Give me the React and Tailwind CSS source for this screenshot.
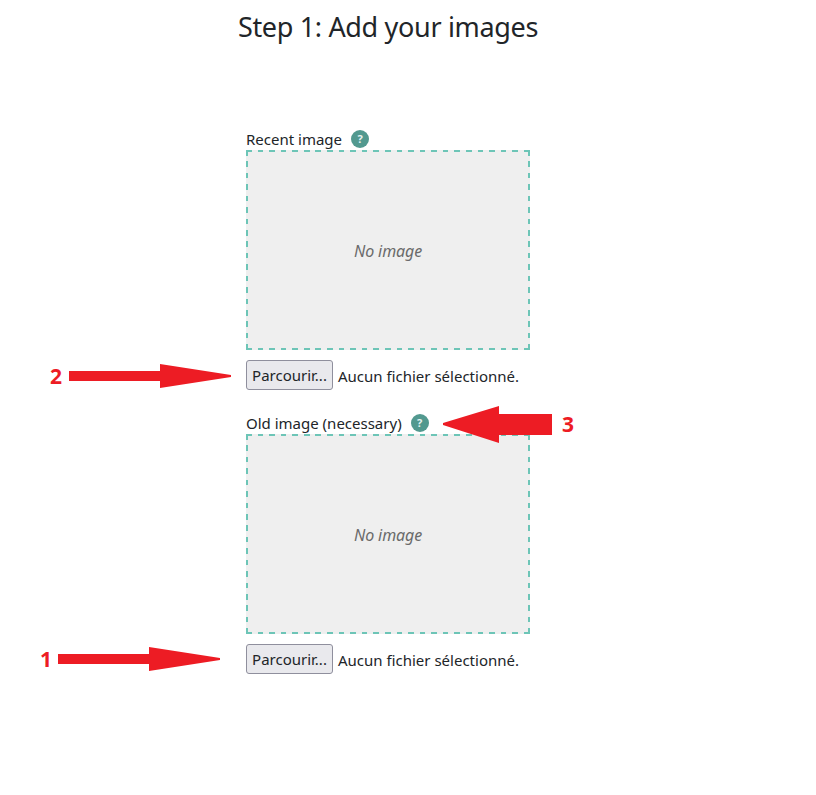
import React from 'react';

const sans = 'font-["Noto_Sans","Open_Sans",sans-serif]';

// Red callout arrow drawn over the page
const Arrow = ({ className, points, width, height }) => (
    <svg className={`absolute ${className}`} width={width} height={height} viewBox={`0 0 ${width} ${height}`}>
        <polygon points={points} fill="#ed1c24" />
    </svg>
);

const Callout = ({ className, children }) => (
    <span className={`absolute font-["Open_Sans",sans-serif] text-[21px] leading-[24px] font-bold text-[#ed1c24] ${className}`}>
        {children}
    </span>
);

const ImageField = ({ label }) => (
    <div className="flex flex-col">
        <div className="flex h-5 items-center pb-0.5 text-[15px] leading-5 text-[#212529]">
            <span>{label}</span>
            <span className="ml-[9px] flex h-[18px] w-[18px] items-center justify-center rounded-full bg-[#52998f] text-[11px] font-bold text-[#e6f2f0]">?</span>
        </div>
        {/* dashes are longer than a css dashed border gives, so they are gradients */}
        <div className="flex h-[200px] w-[284px] items-center justify-center bg-[#efefef] [background-image:repeating-linear-gradient(90deg,#6dc5b7_0_5.6px,transparent_5.6px_11.58px),repeating-linear-gradient(90deg,#6dc5b7_0_5.6px,transparent_5.6px_11.58px),repeating-linear-gradient(180deg,#6dc5b7_0_5.6px,transparent_5.6px_11.43px),repeating-linear-gradient(180deg,#6dc5b7_0_5.6px,transparent_5.6px_11.43px)] [background-position:top,bottom,left,right] [background-size:100%_2px,100%_2px,2px_100%,2px_100%] bg-no-repeat">
            <span className="pt-0.5 text-[16px] tracking-[-0.1px] text-[#6a6a6a] italic">No image</span>
        </div>
        <div className="mt-2.5 flex h-[30px] items-center text-[15px] text-[#212529]">
            <button className="h-[30px] w-[87px] rounded-[3px] border border-[#8f8f9d] bg-[#e9e9ed] text-center">Parcourir...</button>
            <span className="ml-[5px] pt-0.5">Aucun fichier sélectionné.</span>
        </div>
    </div>
);

export default function App() {
    return (
        <div className={`relative h-[795px] w-[816px] overflow-hidden bg-white ${sans}`}>
            <h3 className="w-[776px] pt-[8px] text-center text-[27px] leading-[38px] font-normal tracking-[-0.33px] text-[#212529]">
                Step 1: Add your images
            </h3>

            <div className="mt-[84px] ml-[246px] flex w-[284px] flex-col gap-6">
                <ImageField label="Recent image" />
                <ImageField label="Old image (necessary)" />
            </div>

            <Callout className="top-[364px] left-[50px]">2</Callout>
            <Arrow className="top-[364px] left-[69px]" width={162} height={24} points="0,7 91,7 91,0 162,11 162,13 91,24 91,17 0,17" />

            <Callout className="top-[412px] left-[562px]">3</Callout>
            <Arrow className="top-[406px] left-[443px]" width={109} height={37} points="0,17 56,0 56,8 109,8 109,29 56,29 56,37 0,19" />

            <Callout className="top-[647px] left-[40px]">1</Callout>
            <Arrow className="top-[647px] left-[58px]" width={162} height={24} points="0,7 91,7 91,0 162,11 162,13 91,24 91,17 0,17" />
        </div>
    );
}
